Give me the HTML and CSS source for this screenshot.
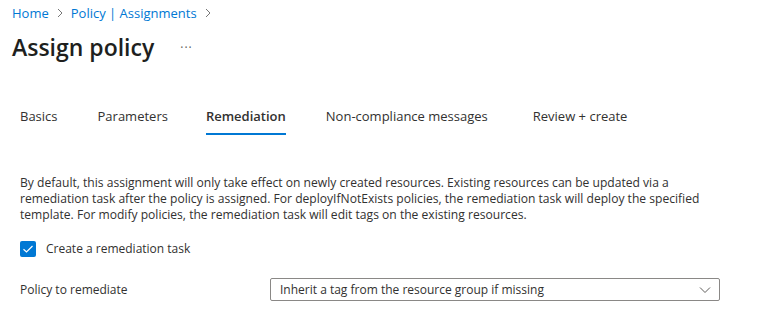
FILE: index.html
```html
<!DOCTYPE html>
<html lang="en">
<head>
<meta charset="utf-8">
<title>Assign policy</title>
<link rel="stylesheet" href="styles.css">
</head>
<body>
<div class="page">
  <nav class="breadcrumb">
    <a class="crumb" href="#">Home</a>
    <svg class="chev" width="8" height="10" viewBox="0 0 8 10"><path d="M2 1 L6 5 L2 9" fill="none" stroke="#777" stroke-width="1"/></svg>
    <a class="crumb" href="#">Policy | Assignments</a>
    <svg class="chev" width="8" height="10" viewBox="0 0 8 10"><path d="M2 1 L6 5 L2 9" fill="none" stroke="#777" stroke-width="1"/></svg>
  </nav>
  <header class="title-row">
    <h1 class="title">Assign policy</h1>
    <span class="more">&middot;&middot;&middot;</span>
  </header>
  <div class="tabs">
    <span class="tab">Basics</span>
    <span class="tab">Parameters</span>
    <span class="tab active">Remediation</span>
    <span class="tab wide">Non-compliance messages</span>
    <span class="tab">Review + create</span>
  </div>
  <section class="content">
    <p class="desc">By default, this assignment will only take effect on newly created resources. Existing resources can be updated via a remediation task after the policy is assigned. For deployIfNotExists policies, the remediation task will deploy the specified template. For modify policies, the remediation task will edit tags on the existing resources.</p>
    <label class="check-row">
      <span class="checkbox">
        <svg width="12" height="10" viewBox="0 0 12 10"><path d="M1.5 5.2 L4.5 8 L10.5 2" fill="none" stroke="#fff" stroke-width="1.2"/></svg>
      </span>
      <span class="check-label">Create a remediation task</span>
    </label>
    <div class="field-row">
      <span class="field-label">Policy to remediate</span>
      <div class="select">
        <span class="select-value">Inherit a tag from the resource group if missing</span>
        <svg class="select-chev" width="12" height="8" viewBox="0 0 12 8"><path d="M1 1.5 L6 6.5 L11 1.5" fill="none" stroke="#605e5c" stroke-width="1"/></svg>
      </div>
    </div>
  </section>
</div>
</body>
</html>
```
FILE: styles.css
```css
* { box-sizing: border-box; }
body {
  margin: 0;
  background: #fff;
  font-family: "Open Sans", "Noto Sans", sans-serif;
  font-size: 13px;
  color: #323130;
}
.page { padding: 4px 0 0 12px; }
.breadcrumb {
  display: flex;
  align-items: center;
  gap: 7px;
  height: 18px;
}
.crumb { color: #0078d4; text-decoration: none; font-size: 13px; }
.chev { display: block; }
.title-row {
  display: flex;
  align-items: center;
  margin-top: 9px;
  height: 32px;
}
.title {
  margin: 0;
  font-size: 23px;
  font-weight: 600;
  color: #201f1e;
}
.more {
  margin-left: 26px;
  color: #605e5c;
  font-size: 12px;
  letter-spacing: 1px;
}
.tabs {
  display: flex;
  margin-top: 43px;
  padding-left: 8px;
  height: 30px;
}
.tab {
  position: relative;
  margin-right: 40px;
  height: 29px;
  line-height: 20px;
  color: #323130;
}
.tab.active { font-weight: 600; margin-left: -2px; }
.tab.active::after {
  content: "";
  position: absolute;
  left: 0; right: 0; bottom: 0;
  height: 2px;
  background: #0078d4;
}
.tab.wide { margin-right: 45px; }
.content { padding-left: 8px; width: 720px; }
.desc {
  margin: 39px 0 0;
  line-height: 16px;
  font-size: 12.1px;
}
.check-row {
  display: flex;
  align-items: center;
  gap: 10px;
  margin-top: 17px;
}
.checkbox {
  width: 16px; height: 16px;
  border-radius: 2px;
  background: #0078d4;
  display: flex; align-items: center; justify-content: center;
}
.check-label { font-size: 12px; }
.field-row {
  display: flex;
  align-items: center;
  margin-top: 21px;
}
.field-label { width: 250px; font-size: 12px; }
.select {
  flex: 0 0 450px;
  height: 23px;
  border: 1px solid #8a8886;
  border-radius: 2px;
  display: flex;
  align-items: center;
  justify-content: space-between;
  padding: 0 8px 0 9px;
  font-size: 12px;
}
.select-chev { display: block; }
```
